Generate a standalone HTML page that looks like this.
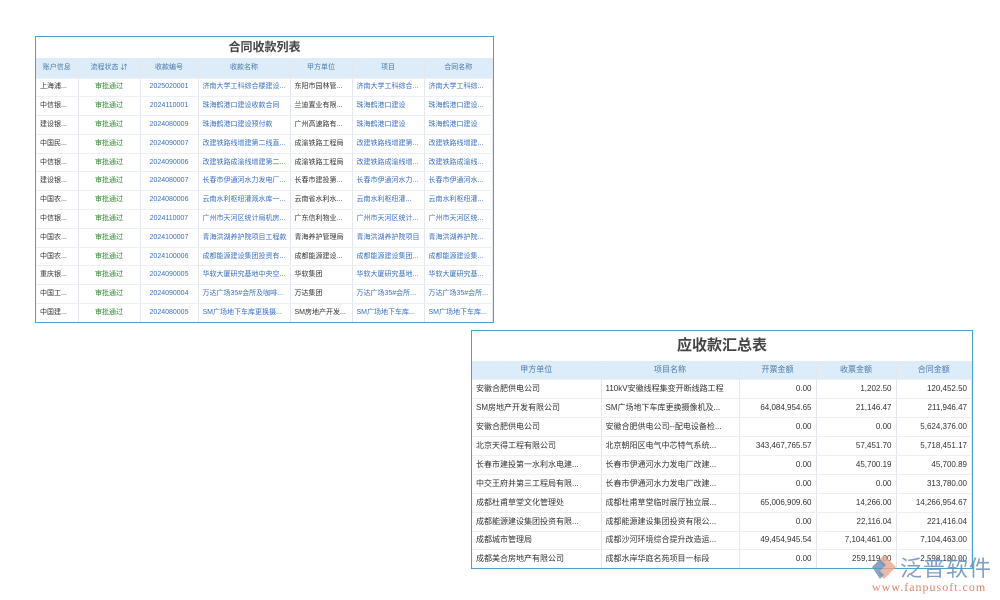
<!DOCTYPE html><html><head><meta charset="utf-8"><style>
body{margin:0;width:1000px;height:600px;background:#fff;position:relative;overflow:hidden;font-family:"Liberation Sans","Noto Sans CJK SC",sans-serif}
.box{position:absolute;border:1px solid #4aa3c8;background:#fff;box-sizing:border-box;overflow:hidden}
table{border-collapse:collapse;table-layout:fixed;width:100%}
td,th{white-space:nowrap;overflow:hidden;padding:0 4px;border-right:1px solid #e3e8ee;border-bottom:1px solid #eceff3;box-sizing:border-box;vertical-align:middle;line-height:10px}
th{background:#dcecf9;color:#4a79a8;font-weight:normal}
.t1 td,.t1 th{font-size:7px;height:18.8px}
.t1 th{height:20px}
.t1 td{color:#333}
.t1 td.g{color:#2e8b2e;text-align:center}
.t1 td.b{color:#3a6fc4}
.t1 td.c{text-align:center}
.t2 td,.t2 th{font-size:8px;height:18.9px}
.t2 td{color:#333}
.t2 td.r{text-align:right}
.ttl{text-align:center;color:#444;font-weight:bold}
</style></head><body>
<div class="box" style="left:35px;top:36px;width:459px;height:287px">
<div class="ttl" style="height:21px;line-height:21px;font-size:12px">合同收款列表</div>
<table class="t1"><colgroup><col style="width:42px"><col style="width:62px"><col style="width:58px"><col style="width:92px"><col style="width:62px"><col style="width:72px"><col></colgroup>
<tr><th>账户信息</th><th>流程状态 ⇵</th><th>收款编号</th><th>收款名称</th><th>甲方单位</th><th>项目</th><th>合同名称</th></tr>
<tr><td>上海浦...</td><td class="g">审批通过</td><td class="b c">2025020001</td><td class="b">济南大学工科综合楼建设...</td><td>东阳市园林管...</td><td class="b">济南大学工科综合...</td><td class="b">济南大学工科综...</td></tr>
<tr><td>中信银...</td><td class="g">审批通过</td><td class="b c">2024110001</td><td class="b">珠海鹤港口建设收款合同</td><td>兰迪置业有限...</td><td class="b">珠海鹤港口建设</td><td class="b">珠海鹤港口建设...</td></tr>
<tr><td>建设银...</td><td class="g">审批通过</td><td class="b c">2024080009</td><td class="b">珠海鹤港口建设预付款</td><td>广州高速路有...</td><td class="b">珠海鹤港口建设</td><td class="b">珠海鹤港口建设</td></tr>
<tr><td>中国民...</td><td class="g">审批通过</td><td class="b c">2024090007</td><td class="b">改建铁路线增建第二线直...</td><td>成渝铁路工程局</td><td class="b">改建铁路线增建第...</td><td class="b">改建铁路线增建...</td></tr>
<tr><td>中信银...</td><td class="g">审批通过</td><td class="b c">2024090006</td><td class="b">改建铁路成渝线增建第二...</td><td>成渝铁路工程局</td><td class="b">改建铁路成渝线增...</td><td class="b">改建铁路成渝线...</td></tr>
<tr><td>建设银...</td><td class="g">审批通过</td><td class="b c">2024080007</td><td class="b">长春市伊通河水力发电厂...</td><td>长春市建投第...</td><td class="b">长春市伊通河水力...</td><td class="b">长春市伊通河水...</td></tr>
<tr><td>中国农...</td><td class="g">审批通过</td><td class="b c">2024080006</td><td class="b">云南水利枢纽灌溉水库一...</td><td>云南省水利水...</td><td class="b">云南水利枢纽灌...</td><td class="b">云南水利枢纽灌...</td></tr>
<tr><td>中信银...</td><td class="g">审批通过</td><td class="b c">2024110007</td><td class="b">广州市天河区统计局机房...</td><td>广东信利物业...</td><td class="b">广州市天河区统计...</td><td class="b">广州市天河区统...</td></tr>
<tr><td>中国农...</td><td class="g">审批通过</td><td class="b c">2024100007</td><td class="b">青海洪湖养护院项目工程款</td><td>青海养护管理局</td><td class="b">青海洪湖养护院项目</td><td class="b">青海洪湖养护院...</td></tr>
<tr><td>中国农...</td><td class="g">审批通过</td><td class="b c">2024100006</td><td class="b">成都能源建设集团投资有...</td><td>成都能源建设...</td><td class="b">成都能源建设集团...</td><td class="b">成都能源建设集...</td></tr>
<tr><td>重庆银...</td><td class="g">审批通过</td><td class="b c">2024090005</td><td class="b">华软大厦研究基地中央空...</td><td>华软集团</td><td class="b">华软大厦研究基地...</td><td class="b">华软大厦研究基...</td></tr>
<tr><td>中国工...</td><td class="g">审批通过</td><td class="b c">2024090004</td><td class="b">万达广场35#会所及咖啡...</td><td>万达集团</td><td class="b">万达广场35#会所...</td><td class="b">万达广场35#会所...</td></tr>
<tr><td>中国建...</td><td class="g">审批通过</td><td class="b c">2024080005</td><td class="b">SM广场地下车库更换摄...</td><td>SM房地产开发...</td><td class="b">SM广场地下车库...</td><td class="b">SM广场地下车库...</td></tr>
</table></div>
<div class="box" style="left:471px;top:330px;width:502px;height:239px">
<div class="ttl" style="height:30px;line-height:30px;font-size:15px">应收款汇总表</div>
<table class="t2"><colgroup><col style="width:129px"><col style="width:138px"><col style="width:77px"><col style="width:80px"><col></colgroup>
<tr><th>甲方单位</th><th>项目名称</th><th>开票金额</th><th>收票金额</th><th>合同金额</th></tr>
<tr><td>安徽合肥供电公司</td><td>110kV安徽线程集变开断线路工程</td><td class="r">0.00</td><td class="r">1,202.50</td><td class="r">120,452.50</td></tr>
<tr><td>SM房地产开发有限公司</td><td>SM广场地下车库更换摄像机及...</td><td class="r">64,084,954.65</td><td class="r">21,146.47</td><td class="r">211,946.47</td></tr>
<tr><td>安徽合肥供电公司</td><td>安徽合肥供电公司--配电设备检...</td><td class="r">0.00</td><td class="r">0.00</td><td class="r">5,624,376.00</td></tr>
<tr><td>北京天得工程有限公司</td><td>北京朝阳区电气中芯特气系统...</td><td class="r">343,467,765.57</td><td class="r">57,451.70</td><td class="r">5,718,451.17</td></tr>
<tr><td>长春市建投第一水利水电建...</td><td>长春市伊通河水力发电厂改建...</td><td class="r">0.00</td><td class="r">45,700.19</td><td class="r">45,700.89</td></tr>
<tr><td>中交王府井第三工程局有限...</td><td>长春市伊通河水力发电厂改建...</td><td class="r">0.00</td><td class="r">0.00</td><td class="r">313,780.00</td></tr>
<tr><td>成都杜甫草堂文化管理处</td><td>成都杜甫草堂临时展厅独立展...</td><td class="r">65,006,909.60</td><td class="r">14,266.00</td><td class="r">14,266,954.67</td></tr>
<tr><td>成都能源建设集团投资有限...</td><td>成都能源建设集团投资有限公...</td><td class="r">0.00</td><td class="r">22,116.04</td><td class="r">221,416.04</td></tr>
<tr><td>成都城市管理局</td><td>成都沙河环境综合提升改造运...</td><td class="r">49,454,945.54</td><td class="r">7,104,461.00</td><td class="r">7,104,463.00</td></tr>
<tr><td>成都美合房地产有限公司</td><td>成都水岸华庭名苑项目一标段</td><td class="r">0.00</td><td class="r">259,119.00</td><td class="r">2,598,180.00</td></tr>
</table></div>
<svg style="position:absolute;left:870px;top:553px" width="28" height="28" viewBox="0 0 28 28"><path d="M14 2 L26 14 L14 26 L8 20 L14 14 L8 8Z" fill="#e8a58a" opacity=".8"/><path d="M2 14 L10 6 L16 12 L10 18 L14 22 L10 26Z" fill="#6b8fb8" opacity=".8"/></svg>
<div style="position:absolute;left:900px;top:551px;font-size:22px;color:#6b8fb8;opacity:.85;letter-spacing:1px">泛普软件</div>
<div style="position:absolute;left:872px;top:580px;font-size:12px;color:#d9866a;font-family:'Liberation Serif',serif;letter-spacing:1px">www.fanpusoft.com</div>
</body></html>
